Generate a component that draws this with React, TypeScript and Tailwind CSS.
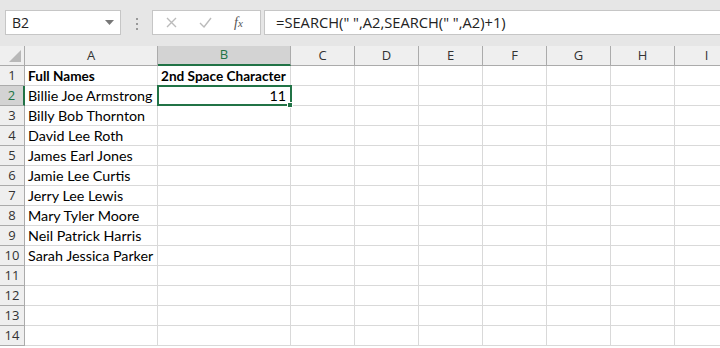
import React from "react";

const cols = ["A", "B", "C", "D", "E", "F", "G", "H", "I"];
const widths = ["w-[133px]", "w-[133px]", "w-[64px]", "w-[64px]", "w-[64px]", "w-[64px]", "w-[64px]", "w-[64px]", "w-[64px]"];

const names = [
  "Billie Joe Armstrong",
  "Billy Bob Thornton",
  "David Lee Roth",
  "James Earl Jones",
  "Jamie Lee Curtis",
  "Jerry Lee Lewis",
  "Mary Tyler Moore",
  "Neil Patrick Harris",
  "Sarah Jessica Parker",
];

const cellFont = { fontFamily: "Lato, 'Open Sans', sans-serif" };
const uiFont = { fontFamily: "'Open Sans', 'Noto Sans', sans-serif" };

function Toolbar() {
  return (
    <div className="flex h-[46px] shrink-0 items-start bg-[#e6e6e6] pt-[10px]" style={uiFont}>
      {/* name box */}
      <div className="ml-[5px] flex h-[25px] w-[116px] items-center justify-between border border-[#c6c6c6] bg-white pl-[6px] pr-[6px] text-[14px] text-[#222]">
        <span>B2</span>
        <svg width="9" height="5" viewBox="0 0 9 5">
          <path d="M0 0h9L4.5 5z" fill="#777" />
        </svg>
      </div>
      {/* grip dots */}
      <div className="flex w-[31px] flex-col items-center gap-[3px] pt-[8px]">
        <span className="h-[2px] w-[2px] bg-[#999]" />
        <span className="h-[2px] w-[2px] bg-[#999]" />
        <span className="h-[2px] w-[2px] bg-[#999]" />
      </div>
      {/* cancel / enter / fx */}
      <div className="flex h-[25px] w-[109px] items-center border border-[#c6c6c6] bg-white">
        <svg className="ml-[13px]" width="11" height="11" viewBox="0 0 11 11">
          <path d="M1 1l9 9M10 1l-9 9" stroke="#bbb" strokeWidth="1.4" />
        </svg>
        <svg className="ml-[22px]" width="13" height="11" viewBox="0 0 13 11">
          <path d="M1 6l4 4 7-9" stroke="#bbb" strokeWidth="1.4" fill="none" />
        </svg>
        <span className="ml-[22px] text-[14px] italic text-[#555]" style={{ fontFamily: "'Liberation Serif', serif" }}>
          f<span className="text-[11px]">x</span>
        </span>
      </div>
      {/* formula bar */}
      <div className="ml-[3px] flex h-[25px] flex-1 items-center border border-r-0 border-[#c6c6c6] bg-white pl-[11px] text-[14.7px] text-[#222]">
        =SEARCH(" ",A2,SEARCH(" ",A2)+1)
      </div>
    </div>
  );
}

function HeaderRow() {
  return (
    <div className="flex h-[20px] bg-[#efefef] text-[13px] text-[#333]" style={uiFont}>
      <div className="relative w-[25px] shrink-0 border-b border-r border-[#ababab]">
        <svg className="absolute bottom-[3px] right-[3px]" width="12" height="12" viewBox="0 0 12 12">
          <path d="M12 0v12H0z" fill="#b8b8b8" />
        </svg>
      </div>
      {cols.map((c, i) =>
        c === "B" ? (
          <div
            key={c}
            className={`${widths[i]} flex shrink-0 items-center justify-center border-b-2 border-r border-b-[#217346] border-r-[#ababab] bg-[#d3d3d3] text-[#217346]`}
          >
            {c}
          </div>
        ) : (
          <div
            key={c}
            className={`${widths[i]} flex shrink-0 items-center justify-center border-b border-r border-[#ababab]`}
          >
            {c}
          </div>
        )
      )}
    </div>
  );
}

function Row({ n }: { n: number }) {
  const a = n === 1 ? "Full Names" : names[n - 2] ?? "";
  const b = n === 1 ? "2nd Space Character" : n === 2 ? "11" : "";
  const selected = n === 2;
  return (
    <div className={`flex h-[20px] text-black ${n === 1 ? "text-[13.6px] font-bold" : "text-[14.3px]"}`}>
      <div
        className={`flex w-[25px] shrink-0 items-center justify-center border-b border-[#ababab] text-[13px] font-normal ${
          selected ? "border-r-2 border-r-[#217346] bg-[#d3d3d3] text-[#217346]" : "border-r bg-[#efefef] text-[#333]"
        }`}
        style={uiFont}
      >
        {n}
      </div>
      {cols.map((c, i) => (
        <div
          key={c}
          className={`${widths[i]} relative flex shrink-0 items-center whitespace-nowrap border-b border-r border-[#d9d9d9] pt-[1px] ${
            c === "B" && selected ? "z-10 justify-end pr-[4px]" : "pl-[3px]"
          }`}
          style={cellFont}
        >
          {c === "A" ? a : c === "B" ? b : ""}
          {c === "B" && selected && (
            <>
              <div className="pointer-events-none absolute -left-[1px] -top-[1px] h-[21px] w-[135px] border-2 border-[#217346]" />
              <div className="absolute -bottom-[3px] -right-[3px] h-[6px] w-[6px] border border-white bg-[#217346]" />
            </>
          )}
        </div>
      ))}
    </div>
  );
}

export default function App() {
  return (
    <div className="flex h-[348px] w-[720px] flex-col overflow-hidden bg-white">
      <Toolbar />
      <HeaderRow />
      {Array.from({ length: 14 }, (_, i) => (
        <Row key={i} n={i + 1} />
      ))}
    </div>
  );
}
